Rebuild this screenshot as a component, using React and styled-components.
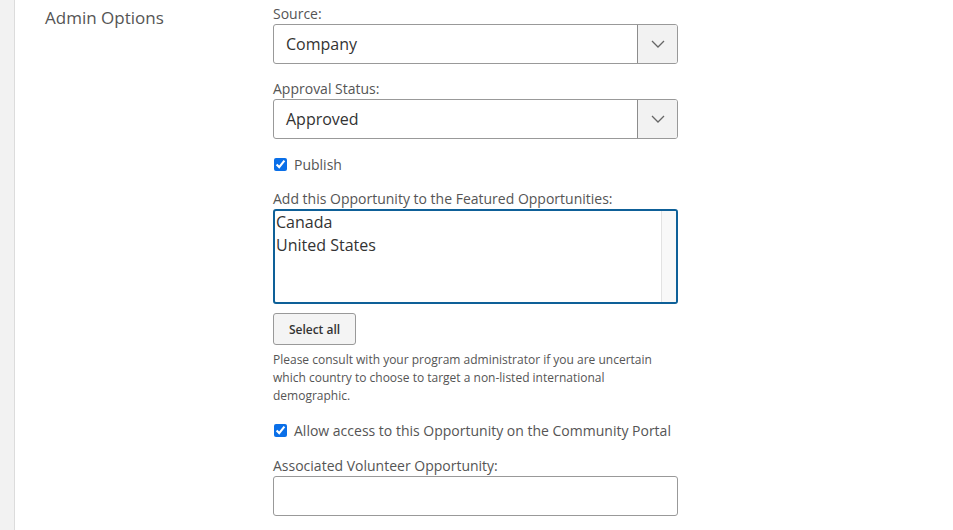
import React from "react";
import styled, { createGlobalStyle } from "styled-components";

const Global = createGlobalStyle`
  html, body { margin: 0; padding: 0; background: #fff; }
  body { font-family: "Open Sans", "Noto Sans", sans-serif; color: #555; }
  * { box-sizing: border-box; }
`;

const Page = styled.div`
  display: flex;
  min-height: 530px;
  height: 530px;
  overflow: hidden;
`;

const Strip = styled.div`
  width: 15px;
  flex: none;
  background: #f2f2f2;
  border-right: 1px solid #dcdcdc;
`;

const Main = styled.div`
  display: grid;
  grid-template-columns: 258px 405px;
  align-items: start;
`;

const Heading = styled.h2`
  margin: 0;
  padding: 7px 0 0 30px;
  font-size: 17px;
  font-weight: 400;
  line-height: 22px;
  color: #555;
`;

const Fields = styled.div`
  display: flex;
  flex-direction: column;
  padding-top: 4px;
`;

const Group = styled.div`
  display: flex;
  flex-direction: column;
  margin-top: ${(p) => p.$mt ?? 15}px;
`;

const Label = styled.label`
  font-size: 14px;
  line-height: 20px;
  color: #555;
`;

const SelectBox = styled.div`
  display: flex;
  height: 40px;
  border: 1px solid #999;
  border-radius: 3px;
  background: #fff;
  overflow: hidden;
`;

const SelectValue = styled.div`
  flex: 1;
  display: flex;
  align-items: center;
  padding-left: 12px;
  font-size: 16px;
  color: #333;
`;

const Arrow = styled.div`
  width: 40px;
  flex: none;
  display: flex;
  align-items: center;
  justify-content: center;
  background: #f2f2f2;
  border-left: 1px solid #8c8c8c;
`;

const CheckRow = styled.label`
  display: flex;
  align-items: center;
  height: 20px;
  margin-top: ${(p) => p.$mt ?? 15}px;
  font-size: 14px;
  color: #555;
`;

const Check = styled.input`
  width: 13px;
  height: 13px;
  margin: 0 7px 0 1px;
  accent-color: #0a6fe8;
`;

const ListBox = styled.div`
  height: 95px;
  border: 2px solid #0e6098;
  border-radius: 3px;
  display: flex;
  overflow: hidden;
`;

const Options = styled.div`
  flex: 1;
  padding: 0 1px;
`;

const Option = styled.div`
  font-size: 16px;
  line-height: 23px;
  color: #333;
`;

const Track = styled.div`
  width: 15px;
  flex: none;
  background: #f8f8f8;
  border-left: 1px solid #e2e2e2;
`;

const Button = styled.button`
  align-self: flex-start;
  margin-top: 9px;
  height: 32px;
  width: 83px;
  padding: 0;
  border: 1px solid #999;
  border-radius: 3px;
  background: #f4f4f4;
  font-family: "Open Sans", sans-serif;
  font-size: 12px;
  font-weight: 600;
  color: #333;
`;

const Help = styled.p`
  margin: 6px 0 0;
  font-size: 12px;
  line-height: 18px;
  color: #555;
`;

const TextInput = styled.input`
  height: 40px;
  border: 1px solid #999;
  border-radius: 3px;
  background: #fff;
  font-size: 16px;
  padding: 0 12px;
`;

const Chevron = () => (
  <svg width="14" height="8" viewBox="0 0 14 8" fill="none">
    <path d="M1 1l6 6 6-6" stroke="#666" strokeWidth="1.3" />
  </svg>
);

export default function App() {
  return (
    <>
      <Global />
      <Page>
        <Strip />
        <Main>
          <Heading>Admin Options</Heading>
          <Fields>
            <Group $mt={0}>
              <Label>Source:</Label>
              <SelectBox>
                <SelectValue>Company</SelectValue>
                <Arrow><Chevron /></Arrow>
              </SelectBox>
            </Group>
            <Group>
              <Label>Approval Status:</Label>
              <SelectBox>
                <SelectValue>Approved</SelectValue>
                <Arrow><Chevron /></Arrow>
              </SelectBox>
            </Group>
            <CheckRow>
              <Check type="checkbox" defaultChecked />
              Publish
            </CheckRow>
            <Group>
              <Label>Add this Opportunity to the Featured Opportunities:</Label>
              <ListBox role="listbox">
                <Options>
                  <Option>Canada</Option>
                  <Option>United States</Option>
                </Options>
                <Track />
              </ListBox>
            </Group>
            <Button>Select all</Button>
            <Help>
              Please consult with your program administrator if you are uncertain
              which country to choose to target a non-listed international
              demographic.
            </Help>
            <CheckRow>
              <Check type="checkbox" defaultChecked />
              Allow access to this Opportunity on the Community Portal
            </CheckRow>
            <Group $mt={16}>
              <Label>Associated Volunteer Opportunity:</Label>
              <TextInput type="text" />
            </Group>
          </Fields>
        </Main>
      </Page>
    </>
  );
}
